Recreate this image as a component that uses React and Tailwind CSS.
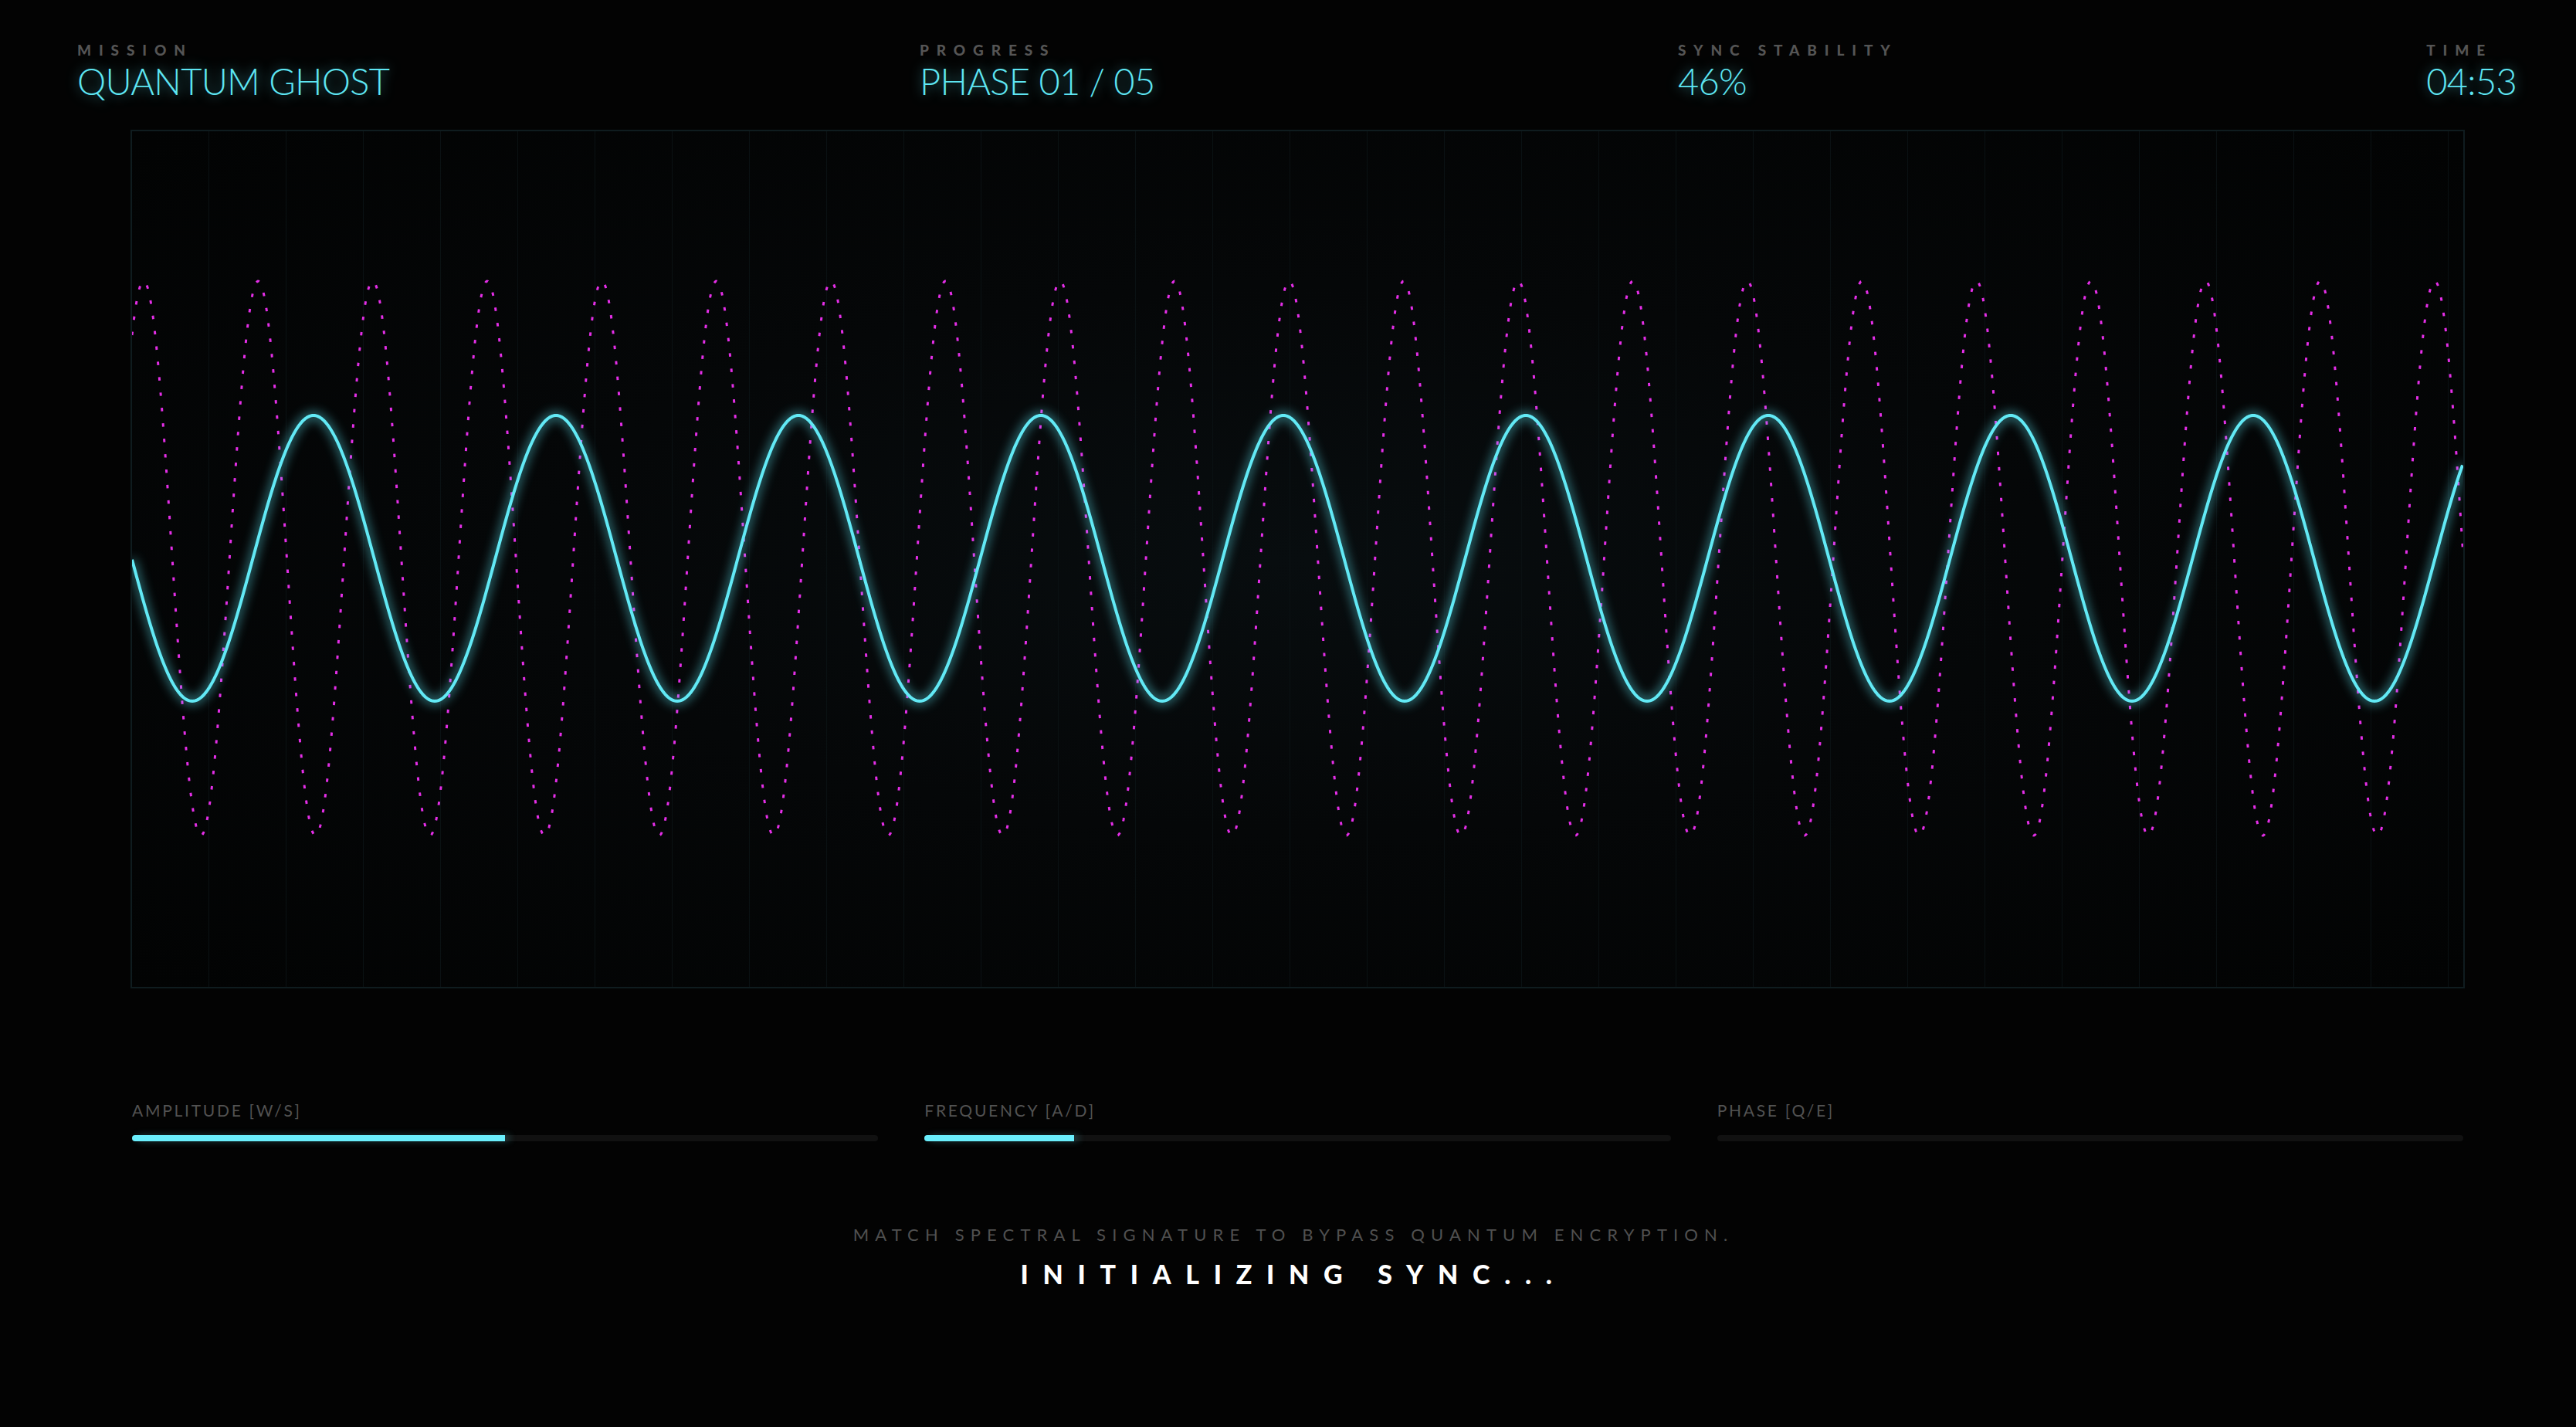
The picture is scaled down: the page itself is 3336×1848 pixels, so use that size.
import { useMemo } from 'react';

const FONT = { fontFamily: 'Lato, "Noto Sans", sans-serif' };

const W = 3019;
const H = 1108;

function buildPath(fn, step = 2) {
  let d = '';
  for (let x = 0; x <= W; x += step) {
    const y = fn(x);
    d += (x === 0 ? 'M' : 'L') + x.toFixed(1) + ' ' + y.toFixed(2) + ' ';
  }
  return d;
}

function Stat({ label, value, className }) {
  return (
    <div className={className}>
      <p className="text-[19px] font-black uppercase leading-none tracking-[0.52em] text-[#555555]">{label}</p>
      <p className="mt-[8px] text-[47px] font-light uppercase leading-none tracking-[-0.015em] text-[#5ee6f3] [text-shadow:0_0_16px_rgba(94,230,243,0.6)]">
        {value}
      </p>
    </div>
  );
}

function Waveform() {
  const cyan = useMemo(
    () => buildPath((x) => 553 - 185 * Math.cos((2 * Math.PI * (x + 171 - 1662)) / 314)),
    []
  );
  const magenta = useMemo(
    () => buildPath((x) => 553 - 359 * Math.cos((2 * Math.PI * (x + 171 - 186)) / 148.35), 1),
    []
  );
  const gridLines = [];
  for (let x = 99; x < W; x += 100) gridLines.push(x);

  return (
    <svg width={W} height={H} viewBox={`0 0 ${W} ${H}`} className="block">
      <defs>
        <filter id="glow" x="-5%" y="-20%" width="110%" height="140%">
          <feGaussianBlur stdDeviation="7" />
        </filter>
      </defs>
      {gridLines.map((x) => (
        <line key={x} x1={x + 0.5} y1="0" x2={x + 0.5} y2={H} stroke="#0a1113" strokeWidth="1" />
      ))}
      <path d={magenta} fill="none" stroke="#e52ee8" strokeWidth="3" strokeDasharray="4.5 15.5" />
      <path d={cyan} fill="none" stroke="#5ee6f3" strokeWidth="8" strokeLinejoin="round" filter="url(#glow)" opacity="0.6" />
      <path d={cyan} fill="none" stroke="#62e9f5" strokeWidth="4" strokeLinejoin="round" />
    </svg>
  );
}

function Slider({ label, value }) {
  return (
    <div>
      <p className="text-[21px] uppercase leading-none tracking-[0.13em] text-[#525252]">{label}</p>
      <div className="mt-[22px] h-[8px] w-full rounded-full bg-[#111111]">
        {value > 0 && (
          <div
            className="h-full rounded-l-full bg-[#6aeefc] shadow-[6px_0_10px_rgba(106,238,252,0.25)]"
            style={{ width: `${value}%` }}
          />
        )}
      </div>
    </div>
  );
}

export default function App() {
  return (
    <div className="h-screen w-full overflow-hidden bg-[#030303]" style={FONT}>
      <div className="flex pl-[100px] pr-[77px] pt-[55px]">
        <Stat label="Mission" value="Quantum Ghost" className="w-[1091px] shrink-0" />
        <Stat label="Progress" value="Phase 01 / 05" className="w-[982px] shrink-0" />
        <Stat label="Sync Stability" value="46%" className="w-[963px] shrink-0" />
        <Stat label="Time" value="04:53" className="ml-auto" />
      </div>

      <div className="ml-[169px] mt-[39px] w-[3023px] overflow-hidden border-2 border-[#0f1c1f] bg-[radial-gradient(ellipse_at_center,#080d0f_0%,#050708_45%,#020303_100%)]">
        <Waveform />
      </div>

      <div className="ml-[171px] mt-[147px] grid w-[3019px] grid-cols-3 gap-[60px]">
        <Slider label="Amplitude [W/S]" value={50} />
        <Slider label="Frequency [A/D]" value={20} />
        <Slider label="Phase [Q/E]" value={0} />
      </div>

      <div className="mt-[110px] flex flex-col items-center pl-[14px]">
        <p className="text-[22px] uppercase leading-none tracking-[0.37em] text-[#505050]">
          Match spectral signature to bypass quantum encryption.
        </p>
        <p className="mt-[23px] text-[34px] font-black uppercase leading-none tracking-[0.55em] text-white">
          Initializing sync...
        </p>
      </div>
    </div>
  );
}
